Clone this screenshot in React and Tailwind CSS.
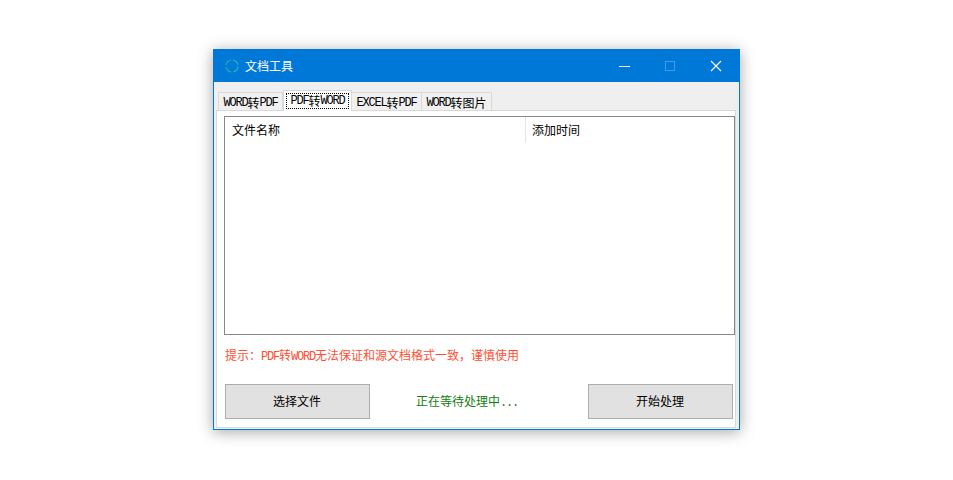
const CJK = 'font-["Noto_Sans_CJK_SC",sans-serif] text-[12px] leading-[14px]';

// latin runs sit in a 6px wide mono cell, like the bitmap font of the original
function Latin({ children }) {
  return <span className='font-["Liberation_Mono",monospace] tracking-[-1.2px]'>{children}</span>;
}

const tabs = [
  { a: 'WORD', b: 'PDF', w: 'w-[65px]' },
  { a: 'PDF', b: 'WORD', w: 'w-[69px]', active: true },
  { a: 'EXCEL', b: 'PDF', w: 'w-[70px]' },
  { a: 'WORD', b: '图片', w: 'w-[70px]' },
];

function Tab({ tab }) {
  if (tab.active) {
    return (
      <div className={`${tab.w} h-[21px] -mb-px z-10 bg-white border border-b-0 border-[#d9d9d9] p-[2px] pb-0`}>
        <div className="h-[16px] flex items-center justify-center border border-dotted border-black whitespace-nowrap">
          <Latin>{tab.a}</Latin>转<Latin>{tab.b}</Latin>
        </div>
      </div>
    );
  }
  return (
    <div className={`${tab.w} h-[18px] pt-[2px] flex items-center justify-center bg-[#f0f0f0] border border-b-0 border-l-0 first:border-l border-[#d9d9d9] whitespace-nowrap`}>
      <Latin>{tab.a}</Latin>转{tab.b === '图片' ? tab.b : <Latin>{tab.b}</Latin>}
    </div>
  );
}

export default function App() {
  return (
    <div className="w-[953px] h-[480px] bg-white pt-[49px] pl-[213px] overflow-hidden">
      <div className={`w-[527px] h-[381px] flex flex-col border border-[#0078d7] bg-[#efefef] shadow-[0_2px_14px_rgba(0,0,0,0.35)] text-black ${CJK}`}>
        {/* title bar */}
        <div className="h-[32px] shrink-0 flex items-center bg-[#0078d7] text-white">
          <svg className="ml-[10px] -mt-[1px]" width="16" height="16" viewBox="0 0 16 16" fill="none">
            <circle cx="8" cy="8" r="6" stroke="#17b8b0" strokeWidth="1.1" strokeDasharray="7.4 2" strokeDashoffset="-0.4" />
          </svg>
          <span className="ml-[5px] -mt-[1px]">文档工具</span>
          <div className="ml-auto flex items-center">
            <div className="w-[46px] flex justify-center">
              <svg width="11" height="11" viewBox="0 0 11 11"><path d="M0 5.5H11" stroke="#fff" strokeWidth="1" /></svg>
            </div>
            <div className="w-[46px] flex justify-center">
              <svg width="11" height="11" viewBox="0 0 11 11"><rect x="0.5" y="0.5" width="9" height="9" fill="none" stroke="#3f9be5" strokeWidth="1" /></svg>
            </div>
            <div className="w-[46px] flex justify-center">
              <svg width="12" height="12" viewBox="0 0 12 12"><path d="M1 1L11 11M11 1L1 11" stroke="#fff" strokeWidth="1.1" /></svg>
            </div>
          </div>
        </div>

        {/* tabs */}
        <div className="h-[28px] shrink-0 flex items-end pl-[4px]">
          {tabs.map((t) => <Tab key={t.a + t.b} tab={t} />)}
        </div>

        {/* tab page */}
        <div className="w-[520px] h-[318px] ml-[2px] bg-white border border-[#d9d9d9] pl-[7px] pt-[5px] flex flex-col">
          <div className="w-[511px] h-[219px] shrink-0 border border-[#828790] bg-white">
            <div className="flex h-[26px]">
              <div className="w-[301px] pl-[7px] pt-[6px] border-r border-[#e5e5e5]">文件名称</div>
              <div className="pl-[6px] pt-[6px]">添加时间</div>
            </div>
          </div>

          <div className="mt-[13px] ml-[1px] text-[#ff4f33] whitespace-nowrap">
            提示{'\uFF1A'}<Latin>PDF</Latin>转<Latin>WORD</Latin>无法保证和源文档格式一致{'\uFF0C'}谨慎使用
          </div>

          <div className="mt-[20px] ml-[1px] flex items-center">
            <div className="w-[145px] h-[35px] shrink-0 pb-[2px] pr-[1px] flex items-center justify-center bg-[#e1e1e1] border border-[#adadad]">选择文件</div>
            <div className="ml-[46px] w-[172px] shrink-0 text-[#108010] whitespace-nowrap">正在等待处理中<Latin>...</Latin></div>
            <div className="w-[145px] h-[35px] shrink-0 pb-[2px] pr-[1px] flex items-center justify-center bg-[#e1e1e1] border border-[#adadad]">开始处理</div>
          </div>
        </div>
      </div>
    </div>
  );
}
